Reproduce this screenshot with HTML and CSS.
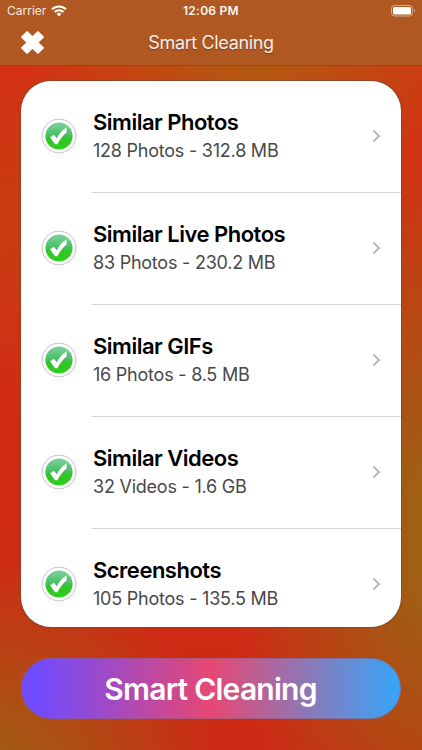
FILE: index.html
```html
<!DOCTYPE html>
<html lang="en">
<head>
<meta charset="utf-8">
<title>Smart Cleaning</title>
<link rel="stylesheet" href="styles.css">
</head>
<body>
<svg class="defs" width="0" height="0" aria-hidden="true">
  <defs>
    <linearGradient id="green" x1="0" y1="0" x2="0" y2="1">
      <stop offset="0" stop-color="#7bd3a0"/>
      <stop offset=".48" stop-color="#4bbd66"/>
      <stop offset=".58" stop-color="#30c62b"/>
      <stop offset="1" stop-color="#2bd01c"/>
    </linearGradient>
    <symbol id="check" viewBox="0 0 36 36">
      <circle cx="18" cy="18" r="16.9" fill="#fff" stroke="#c4c4c8" stroke-width="1"/>
      <circle cx="18" cy="18" r="13.6" fill="url(#green)"/>
      <path d="M9 19.2L12.8 16.7L15.8 20.3C18.2 15.8 21 11.9 25.6 9.2L25.6 14.4C21.6 17.4 18.8 21.5 16.4 26.2L14 26.2Z" fill="#fff"/>
    </symbol>
    <symbol id="chevron" viewBox="0 0 9 14">
      <path d="M1.5 1.5L7 7L1.5 12.5" fill="none" stroke="#b9b9bb" stroke-width="2"/>
    </symbol>
  </defs>
</svg>
<header class="header">
  <div class="status">
    <span class="carrier">Carrier</span>
    <svg class="wifi" viewBox="0 0 16 12"><g fill="none" stroke="#fff" stroke-width="2"><path d="M1 4.3A10 10 0 0 1 15 4.3"/><path d="M3.6 7A6.3 6.3 0 0 1 12.4 7"/></g><path d="M5.6 8.9A3.5 3.5 0 0 1 10.4 8.9L8 11.4Z" fill="#fff"/></svg>
    <span class="time">12:06 PM</span>
    <svg class="battery" viewBox="0 0 25 12"><rect x=".5" y=".5" width="21" height="10.5" rx="3" fill="none" stroke="#fff" stroke-opacity=".5"/><rect x="2" y="2" width="18" height="7.5" rx="1.5" fill="#fff"/><path d="M23 4Q25 5.7 23 7.5Z" fill="#fff" fill-opacity=".5"/></svg>
  </div>
  <nav class="nav">
    <svg class="close" viewBox="0 0 22 22"><path d="M5.8 .5L11 5.7L16.2 .5L21.5 5.8L16.3 11L21.5 16.2L16.2 21.5L11 16.3L5.8 21.5L.5 16.2L5.7 11L.5 5.8Z" fill="#fff" stroke="#fff" stroke-linejoin="round"/></svg>
    <h1 class="title">Smart Cleaning</h1>
  </nav>
</header>
<main class="main">
  <ul class="list">
    <li class="row"><svg class="check"><use href="#check"/></svg><div class="cell"><div class="name">Similar Photos</div><div class="info">128 Photos - 312.8 MB</div><svg class="chevron"><use href="#chevron"/></svg></div></li>
    <li class="row"><svg class="check"><use href="#check"/></svg><div class="cell"><div class="name">Similar Live Photos</div><div class="info">83 Photos - 230.2 MB</div><svg class="chevron"><use href="#chevron"/></svg></div></li>
    <li class="row"><svg class="check"><use href="#check"/></svg><div class="cell"><div class="name">Similar GIFs</div><div class="info">16 Photos - 8.5 MB</div><svg class="chevron"><use href="#chevron"/></svg></div></li>
    <li class="row"><svg class="check"><use href="#check"/></svg><div class="cell"><div class="name">Similar Videos</div><div class="info">32 Videos - 1.6 GB</div><svg class="chevron"><use href="#chevron"/></svg></div></li>
    <li class="row"><svg class="check"><use href="#check"/></svg><div class="cell"><div class="name">Screenshots</div><div class="info">105 Photos - 135.5 MB</div><svg class="chevron"><use href="#chevron"/></svg></div></li>
  </ul>
  <button class="action">Smart Cleaning</button>
</main>
</body>
</html>
```

FILE: styles.css
```css
* { box-sizing: border-box; }
body {
  margin: 0;
  height: 750px;
  overflow: hidden;
  font-family: Inter, "Liberation Sans", sans-serif;
  background:
    radial-gradient(circle 230px at -10px 785px, #9b6413 0, #9b641300 100%),
    radial-gradient(ellipse 210px 400px at 440px 535px, #9b6413 0, #9b6413e0 20%, #9b641300 100%),
    radial-gradient(ellipse 230px 150px at 255px 55px, #b05c10 0, #b05c1000 100%),
    radial-gradient(ellipse 120px 170px at 0 220px, #c83c12 0, #c83c1200 100%),
    linear-gradient(#d63214, #d02c14 60%, #cc2a15);
}
.defs { position: absolute; }
.header {
  height: 66px;
  background: #b05822;
  border-bottom: 1px solid #9a461b;
  color: #fff;
}
.status { display: flex; height: 21px; padding: 0 6px 0 7px; align-items: center; font-size: 12px; }
.carrier { width: 40px; font-size: 12px; opacity: .88; }
.wifi { width: 16px; height: 12px; margin-left: 4px; }
.time { width: 58px; margin-left: 116px; font-weight: 600; letter-spacing: .25px; white-space: nowrap; opacity: .94; }
.battery { width: 25px; height: 12px; margin-left: auto; }
.nav { display: grid; grid-template-columns: 56px 1fr 56px; align-items: center; height: 43px; }
.close { width: 23px; height: 23px; margin-left: 21px; }
.title { margin: 0; text-align: center; font-size: 18px; font-weight: 400; letter-spacing: -.36px; line-height: 24px; color: #fbeee8; text-shadow: 0 1px 1px #0005; }
.main { padding: 15px 21px 0; }
.list { height: 546px; margin: 0; padding: 0; list-style: none; overflow: hidden; border-radius: 30px; background: #fff; box-shadow: 0 0 1px .5px #6b473590; }
.row { display: flex; height: 112px; }
.check { flex: none; width: 36px; height: 36px; margin: 37px 15px 0 20px; }
.cell { display: grid; flex: 1; grid-template-columns: 1fr 9px; grid-template-rows: 28px 29px; align-content: start; padding: 27px 20px 0 1px; border-bottom: 1px solid #d4d4d6; }
.row:last-child .cell { border: 0; }
.name { font-size: 22px; line-height: 28px; font-weight: 600; letter-spacing: -.5px; color: #000; white-space: nowrap; }
.info { grid-row: 2; font-size: 18px; line-height: 29px; letter-spacing: -.23px; color: #48484a; white-space: nowrap; }
.chevron { grid-column: 2; grid-row: 1 / 3; align-self: center; width: 9px; height: 14px; margin-bottom: 1px; }
.action { display: block; width: 100%; height: 61px; margin-top: 31px; padding: 0 1px 0 0; border: 1px solid #8b5b7580; border-radius: 31px; background: linear-gradient(90deg, #704bff 4%, #e64872 50%, #3ca3f5 98%) border-box; color: #fff; font: 600 30px/58px Inter, "Liberation Sans", sans-serif; letter-spacing: -.75px; }
```
